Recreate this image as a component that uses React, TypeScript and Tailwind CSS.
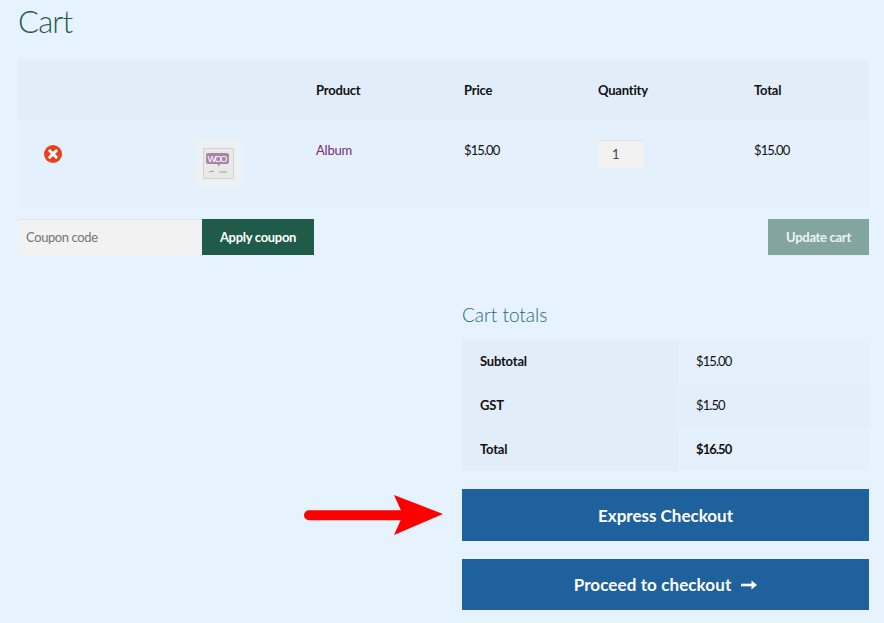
const font = "font-['Lato','Noto_Sans',sans-serif]"

function RemoveIcon() {
  return (
    <svg width="18" height="18" viewBox="0 0 18 18">
      <circle cx="9" cy="9" r="9" fill="#e8401c" />
      <path d="M5.800 5.800l6.400 6.400M12.200 5.800l-6.400 6.400" stroke="#fff" strokeWidth="3" strokeLinecap="round" />
    </svg>
  )
}

function Thumb() {
  return (
    <svg width="47" height="47" viewBox="0 0 47 47" className="block">
      <rect width="47" height="47" fill="#ebf1f5" />
      <rect x="8.500" y="8.500" width="30" height="30" fill="#e9e9e6" stroke="#c9c9c6" strokeWidth="0.7" />
      <rect x="11" y="13" width="23" height="11" rx="2" fill="#a884ab" />
      <path d="M22 24l2 2.500 1-2.500z" fill="#a884ab" />
      <text x="22.500" y="22" fontSize="9.500" textAnchor="middle" fill="#fff" fontFamily="Liberation Sans, sans-serif" textLength="20">WOO</text>
      <path d="M14 32l3-1 2 1M24 32h8" stroke="#8a8a87" strokeWidth="0.8" fill="none" />
    </svg>
  )
}

function Arrow() {
  return (
    <svg width="142" height="44" viewBox="0 0 142 44" className="block">
      <path d="M7 21.300H100" stroke="#ff0000" strokeWidth="10" strokeLinecap="round" />
      <path d="M92 1L141 20L92 41L101 21Z" fill="#ff0000" />
    </svg>
  )
}

function TotalsRow({ label, value, shaded, bold }: { label: string; value: string; shaded?: boolean; bold?: boolean }) {
  return (
    <div className={`grid grid-cols-[216px_1fr] h-[44px] ${shaded ? 'bg-[#e2eefa]' : 'bg-[#e4f1fd]'}`}>
      <div className="bg-[#e1edf9] pl-[18px] pt-[2px] flex items-center text-[13px] font-bold text-[#111] tracking-[-0.2px]">{label}</div>
      <div className={`pl-[18px] pt-[2px] flex items-center text-[13px] text-[#111] tracking-[-0.9px] ${bold ? 'font-bold' : ''}`}>{value}</div>
    </div>
  )
}

export default function App() {
  return (
    <div className={`${font} bg-[#e6f3ff] w-[884px] h-[623px] overflow-hidden pl-[18px] pr-[15px]`}>
      <h1 className="h-[60px] text-[31px] leading-[42px] font-light tracking-[-0.8px] text-[#1f5b48]">Cart</h1>

      <div className="grid grid-cols-[298px_148px_134px_156px_1fr] h-[60px] pt-[2px] bg-[#e1edf9] items-center text-[13px] font-bold text-[#111] tracking-[-0.2px]">
        <div />
        <div>Product</div>
        <div>Price</div>
        <div>Quantity</div>
        <div>Total</div>
      </div>

      <div className="grid grid-cols-[298px_148px_134px_156px_1fr] h-[88px] bg-[#e4f1fd] text-[13px] text-[#111]">
        <div className="flex items-start pt-[20px]">
          <div className="w-[177px] pl-[26px] pt-[5px]"><RemoveIcon /></div>
          <Thumb />
        </div>
        <div className="pt-[21px] text-[#7b2a78] tracking-[-0.2px]">Album</div>
        <div className="pt-[21px] tracking-[-0.9px]">$15.00</div>
        <div className="pt-[20px]">
          <div className="w-[46px] h-[28px] bg-[#f2f2f2] border-t border-[#e4e4e4] pl-[14px] flex items-center text-[#444]">1</div>
        </div>
        <div className="pt-[21px] tracking-[-0.9px]">$15.00</div>
      </div>

      <div className="flex justify-between mt-[11px]">
        <div className="flex gap-[2px]">
          <div className="w-[182px] h-[36px] bg-[#f2f2f2] border-t border-[#e4e4e4] pl-[8px] pt-[1px] flex items-center text-[13px] text-[#757575] tracking-[-0.4px]">Coupon code</div>
          <div className="w-[112px] h-[36px] pt-[2px] bg-[#1f5b48] text-white text-[13px] font-bold tracking-[-0.3px] flex items-center justify-center">Apply coupon</div>
        </div>
        <div className="w-[101px] h-[36px] pt-[2px] bg-[#82a5a0] text-[#edf3f3] text-[13px] font-bold tracking-[-0.3px] flex items-center justify-center">Update cart</div>
      </div>

      <div className="ml-[444px] mt-[47px]">
        <h2 className="h-[37px] text-[19px] leading-[26px] font-light text-[#1f6a78]">Cart totals</h2>
        <TotalsRow label="Subtotal" value="$15.00" />
        <TotalsRow label="GST" value="$1.50" shaded />
        <TotalsRow label="Total" value="$16.50" bold />

        <div className="relative mt-[18px]">
          <div className="absolute left-[-160px] top-[5px]"><Arrow /></div>
          <div className="h-[52px] pt-[2px] bg-[#1e619c] text-white text-[17px] font-bold flex items-center justify-center">Express Checkout</div>
        </div>
        <div className="mt-[18px] h-[51px] bg-[#1e619c] text-white text-[17px] tracking-[0.1px] font-bold flex items-center justify-center gap-[10px]">
          <span>Proceed to checkout</span>
          <svg width="16" height="10" viewBox="0 0 16 10">
            <path d="M0 5h12" stroke="#fff" strokeWidth="2.600" />
            <path d="M10.500 0.500L16 5l-5.500 4.500z" fill="#fff" />
          </svg>
        </div>
      </div>
    </div>
  )
}
